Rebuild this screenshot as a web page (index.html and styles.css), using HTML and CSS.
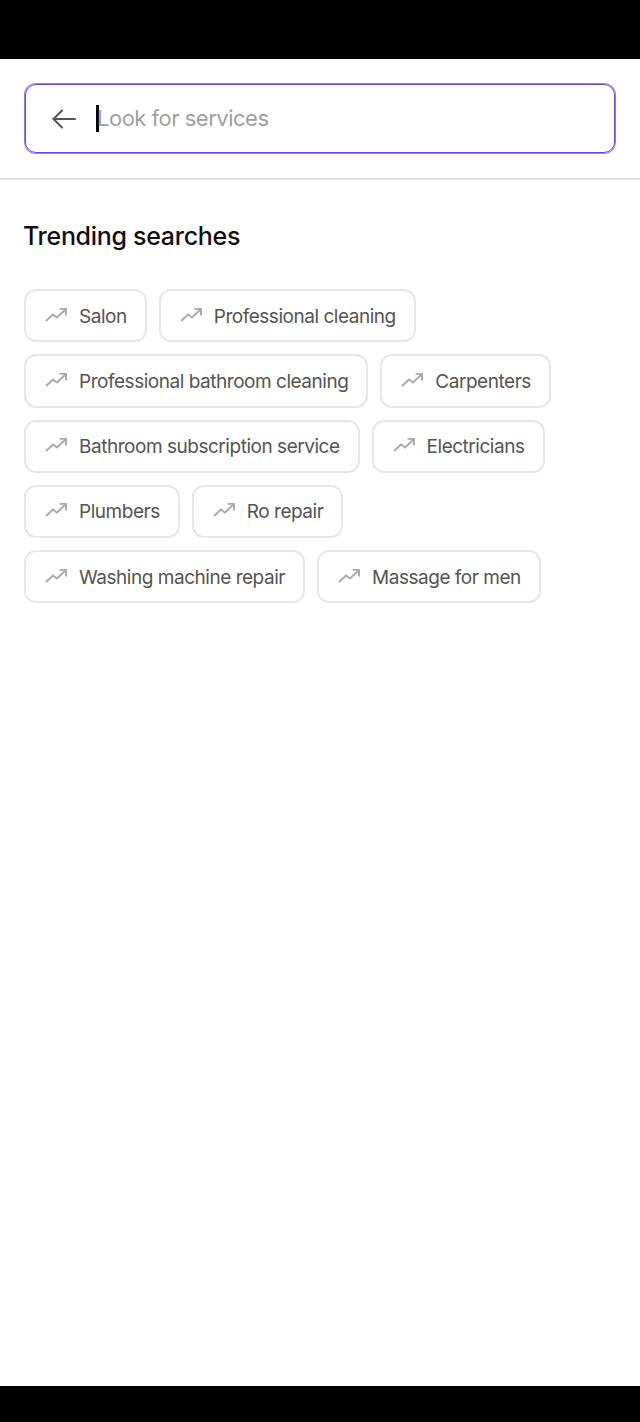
FILE: index.html
```html
<!DOCTYPE html>
<html lang="en">
<head>
    <meta charset="UTF-8">
    <meta name="viewport" content="width=device-width, initial-scale=1.0">
    <title>Search services</title>
    <link rel="stylesheet" href="styles.css">
</head>
<body>
    <div class="status-bar"></div>

    <main class="page">
        <div class="search-wrap">
            <div class="search-box">
                <svg class="back-icon" viewBox="0 0 24 24" width="24" height="24" fill="none" stroke="#545454" stroke-width="2" stroke-linecap="round" stroke-linejoin="round">
                    <path d="M23 12H1.500"/>
                    <path d="M10 3.500L1.500 12l8.500 8.500"/>
                </svg>
                <span class="caret"></span>
                <span class="placeholder">Look for services</span>
            </div>
        </div>

        <section class="trending">
            <h2>Trending searches</h2>
            <div class="chips">
                <div class="chip"><svg class="trend-icon" viewBox="0 0 22 14"><path d="M1 13l7-6.500 4 3L21 1"/><path d="M14.500 .8H21v6.700"/></svg><span>Salon</span></div>
                <div class="chip"><svg class="trend-icon" viewBox="0 0 22 14"><path d="M1 13l7-6.500 4 3L21 1"/><path d="M14.500 .8H21v6.700"/></svg><span>Professional cleaning</span></div>
                <div class="chip"><svg class="trend-icon" viewBox="0 0 22 14"><path d="M1 13l7-6.500 4 3L21 1"/><path d="M14.500 .8H21v6.700"/></svg><span>Professional bathroom cleaning</span></div>
                <div class="chip"><svg class="trend-icon" viewBox="0 0 22 14"><path d="M1 13l7-6.500 4 3L21 1"/><path d="M14.500 .8H21v6.700"/></svg><span>Carpenters</span></div>
                <div class="chip"><svg class="trend-icon" viewBox="0 0 22 14"><path d="M1 13l7-6.500 4 3L21 1"/><path d="M14.500 .8H21v6.700"/></svg><span>Bathroom subscription service</span></div>
                <div class="chip"><svg class="trend-icon" viewBox="0 0 22 14"><path d="M1 13l7-6.500 4 3L21 1"/><path d="M14.500 .8H21v6.700"/></svg><span>Electricians</span></div>
                <div class="chip"><svg class="trend-icon" viewBox="0 0 22 14"><path d="M1 13l7-6.500 4 3L21 1"/><path d="M14.500 .8H21v6.700"/></svg><span>Plumbers</span></div>
                <div class="chip"><svg class="trend-icon" viewBox="0 0 22 14"><path d="M1 13l7-6.500 4 3L21 1"/><path d="M14.500 .8H21v6.700"/></svg><span>Ro repair</span></div>
                <div class="chip"><svg class="trend-icon" viewBox="0 0 22 14"><path d="M1 13l7-6.500 4 3L21 1"/><path d="M14.500 .8H21v6.700"/></svg><span>Washing machine repair</span></div>
                <div class="chip"><svg class="trend-icon" viewBox="0 0 22 14"><path d="M1 13l7-6.500 4 3L21 1"/><path d="M14.500 .8H21v6.700"/></svg><span>Massage for men</span></div>
            </div>
        </section>
    </main>

    <div class="nav-bar"></div>
</body>
</html>
```

FILE: styles.css
```css
html, body {
    height: 100%;
}
body {
    font-family: "Inter", "Liberation Sans", sans-serif;
    background-color: #fff;
    color: #0f0f0f;
    margin: 0;
    padding: 0;
    display: flex;
    flex-direction: column;
}
.status-bar {
    height: 59px;
    background-color: #000;
}
.nav-bar {
    height: 36px;
    background-color: #000;
}
.page {
    flex: 1;
}
.search-wrap {
    padding: 25px 25px;
    border-bottom: 2px solid #e3e3e3;
}
.search-box {
    height: 69px;
    box-sizing: border-box;
    border: 1px solid #6e42e5;
    box-shadow: 0 0 0 1px rgba(110, 66, 229, 0.7);
    border-radius: 11px;
    display: flex;
    align-items: center;
    padding-left: 26px;
}
.back-icon {
    flex: none;
    margin-right: 20px;
}
.caret {
    flex: none;
    width: 3px;
    height: 27px;
    background-color: #000;
}
.placeholder {
    font-size: 22px;
    letter-spacing: -0.5px;
    color: #a0a0a0;
    margin-left: -2px;
    margin-top: -1px;
}
.trending {
    padding: 40px 24px 0;
}
.trending h2 {
    font-size: 25px;
    letter-spacing: -0.3px;
    font-weight: 500;
    line-height: 32px;
    margin: 0 0 37px -1px;
}
.chips {
    display: flex;
    flex-wrap: wrap;
    gap: 12px;
}
.chip {
    height: 53.250px;
    box-sizing: border-box;
    border: 2px solid #e8e8e8;
    border-radius: 12px;
    display: flex;
    align-items: center;
    padding: 1px 18px 0 19px;
    font-size: 19px;
    letter-spacing: -0.47px;
    color: #545454;
}
.trend-icon {
    width: 22px;
    height: 14px;
    margin: -3px 12px 0 0;
    fill: none;
    stroke: #ababab;
    stroke-width: 2;
    flex: none;
}
```
